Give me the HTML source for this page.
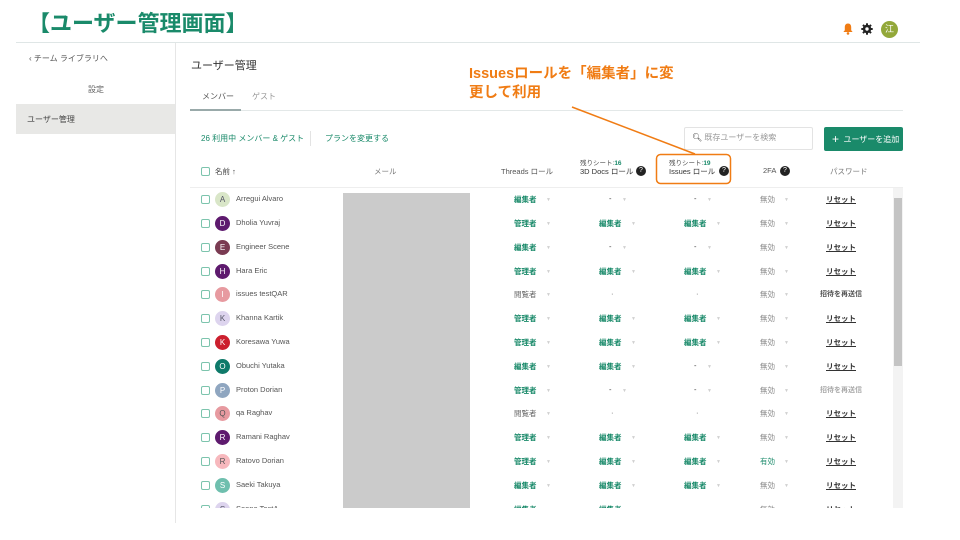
<!DOCTYPE html>
<html><head><meta charset="utf-8"><style>
*{margin:0;padding:0;box-sizing:border-box}
body{width:960px;height:540px;background:#fff;position:relative;overflow:hidden;font-family:"Liberation Sans","Noto Sans CJK JP",sans-serif;color:#555}
.a{position:absolute;white-space:nowrap}
.g{color:#1a8a6a;font-weight:bold}
.cb{position:absolute;width:9px;height:9px;border:1px solid #7cc4ad;border-radius:2px}
.av{position:absolute;width:15px;height:15px;border-radius:50%;font-size:8px;text-align:center;line-height:15px;color:#fff}
.ar{color:#d0d0d0;font-size:5px}
.s{font-size:7.5px}
</style></head><body>
<div class="a" style="left:28px;top:6px;font-size:22px;font-weight:bold;color:#1a8a6a;">【ユーザー管理画面】</div>
<div class="a" style="left:16px;top:42px;width:904px;height:1px;background:#dfe6e6"></div>
<div class="a" style="left:175px;top:43px;width:1px;height:480px;background:#e6e6e6"></div>
<div class="a" style="left:841px;top:22px;width:14px;height:14px"><svg width="14" height="14" viewBox="0 0 14 14"><path d="M7 1.5C4.8 1.5 3.8 3.2 3.8 5.2V8.3L2.4 10H11.6L10.2 8.3V5.2C10.2 3.2 9.2 1.5 7 1.5Z" fill="#f07c14"/><circle cx="7" cy="11.4" r="1.3" fill="#f07c14"/></svg></div>
<div class="a" style="left:860px;top:22px;width:14px;height:14px"><svg width="14" height="14" viewBox="0 0 14 14"><g fill="#222"><circle cx="7" cy="7" r="4.2"/><rect x="6" y="1.3" width="2" height="11.4"/><rect x="1.3" y="6" width="11.4" height="2"/><rect x="6" y="1.3" width="2" height="11.4" transform="rotate(45 7 7)"/><rect x="6" y="1.3" width="2" height="11.4" transform="rotate(-45 7 7)"/></g><circle cx="7" cy="7" r="1.7" fill="#fff"/></svg></div>
<div class="a" style="left:881px;top:21px;width:17px;height:17px;border-radius:50%;background:#93a83a;color:#fff;font-size:9px;text-align:center;line-height:17px">江</div>
<div class="a" style="left:29px;top:53px;font-size:8px;color:#555">‹ チーム ライブラリへ</div>
<div class="a" style="left:88px;top:84px;font-size:8px;color:#666">設定</div>
<div class="a" style="left:16px;top:104px;width:159px;height:30px;background:#e8e8e6"></div>
<div class="a" style="left:27px;top:114px;font-size:8px;color:#444">ユーザー管理</div>
<div class="a" style="left:191px;top:57px;font-size:11px;color:#333">ユーザー管理</div>
<div class="a" style="left:202px;top:91px;font-size:8px;color:#555">メンバー</div>
<div class="a" style="left:252px;top:91px;font-size:8px;color:#999">ゲスト</div>
<div class="a" style="left:190px;top:110px;width:713px;height:1px;background:#e3e8e8"></div>
<div class="a" style="left:190px;top:109px;width:51px;height:2px;background:#9aa"></div>
<div class="a" style="left:201px;top:133px;font-size:8px;color:#1a8a6a">26 利用中 メンバー &amp; ゲスト</div>
<div class="a" style="left:310px;top:131px;width:1px;height:15px;background:#e3e3e3"></div>
<div class="a" style="left:325px;top:133px;font-size:8px;color:#1a8a6a">プランを変更する</div>
<div class="a" style="left:684px;top:127px;width:129px;height:23px;border:1px solid #e3e3e3;border-radius:2px"></div>
<div class="a" style="left:692px;top:132px;font-size:8px;color:#999"><span style="color:#333">&#x1F50D;&#xFE0E;</span> 既存ユーザーを検索</div>
<div class="a" style="left:824px;top:127px;width:79px;height:24px;background:#1a8a6a;border-radius:2px;color:#fff;font-size:8px;line-height:24px;padding-left:8px"><span style="font-size:12px;vertical-align:-1px">+</span>&nbsp; ユーザーを追加</div>
<div class="a" style="left:469px;top:65px;font-size:14.5px;font-weight:bold;color:#f07c14;line-height:19px">Issuesロールを「編集者」に変<br>更して利用</div>
<svg class="a" style="left:0;top:0" width="960" height="540"><line x1="572" y1="107" x2="695" y2="154" stroke="#f07c14" stroke-width="1.5"/><rect x="656.5" y="154.5" width="74" height="29" rx="4" fill="none" stroke="#f07c14" stroke-width="1.5"/></svg>
<div class="cb" style="left:201px;top:167px"></div>
<div class="a s" style="left:215px;top:166px;color:#444">名前 ↑</div>
<div class="a s" style="left:374px;top:166px;color:#777">メール</div>
<div class="a s" style="left:501px;top:166px;color:#555">Threads ロール</div>
<div class="a" style="left:580px;top:157px;font-size:6.5px;color:#555">残りシート:<b style="color:#1a8a6a">16</b></div>
<div class="a s" style="left:580px;top:166px;color:#333">3D Docs ロール</div>
<div class="a" style="left:669px;top:157px;font-size:6.5px;color:#555">残りシート:<b style="color:#1a8a6a">19</b></div>
<div class="a s" style="left:669px;top:166px;color:#333">Issues ロール</div>
<div class="a s" style="left:763px;top:166px;color:#555">2FA</div>
<div class="a s" style="left:830px;top:166px;color:#777">パスワード</div>
<div class="a" style="left:636px;top:166px;width:10px;height:10px;border-radius:50%;background:#222;color:#fff;font-size:7px;text-align:center;line-height:10px">?</div>
<div class="a" style="left:719px;top:166px;width:10px;height:10px;border-radius:50%;background:#222;color:#fff;font-size:7px;text-align:center;line-height:10px">?</div>
<div class="a" style="left:780px;top:166px;width:10px;height:10px;border-radius:50%;background:#222;color:#fff;font-size:7px;text-align:center;line-height:10px">?</div>
<div class="a" style="left:190px;top:187px;width:713px;height:1px;background:#eee"></div>
<div class="a" style="left:343px;top:193px;width:127px;height:315px;background:#cbcbcb"></div>
<div class="a" style="left:893px;top:188px;width:10px;height:320px;background:#f3f3f3"></div>
<div class="a" style="left:894px;top:198px;width:8px;height:168px;background:#c4c4c4"></div>
<div id="rows" class="a" style="left:0;top:0;width:960px;height:508px;overflow:hidden"></div>
<script>
const R=[["A","Arregui Alvaro","#d9e6c8","#556","E","-","-",0,1],
["D","Dholia Yuvraj","#5e1a6e","#fff","A","E","E",0,1],
["E","Engineer Scene","#7a3b52","#fff","E","-","-",0,1],
["H","Hara Eric","#5e1a6e","#fff","A","E","E",0,1],
["I","issues testQAR","#e79aa0","#fff","V",".",".",0,2],
["K","Khanna Kartik","#ddd4ee","#556","A","E","E",0,1],
["K","Koresawa Yuwa","#cc1f2e","#fff","A","E","E",0,1],
["O","Obuchi Yutaka","#0f7a6a","#fff","E","E","-",0,1],
["P","Proton Dorian","#8fa6c0","#fff","A","-","-",0,3],
["Q","qa Raghav","#e79aa0","#555","V",".",".",0,1],
["R","Ramani Raghav","#5e1a6e","#fff","A","E","E",0,1],
["R","Ratovo Dorian","#f7b8bd","#555","A","E","E",1,1],
["S","Saeki Takuya","#6fbfae","#fff","E","E","E",0,1],
["S","Soone TestA","#ddd4ee","#556","E","E","-",0,1]];
const ys=[199,223,247,271,294,318,342,366,390,413,437,461,485,509];
const role=(v,x,arx,darx,y)=>{let s='';
 if(v==="E")s=`<div class="a g s" style="left:${x}px;top:${y}px">編集者</div>`;
 else if(v==="A")s=`<div class="a g s" style="left:${x}px;top:${y}px">管理者</div>`;
 else if(v==="V")s=`<div class="a s" style="left:${x}px;top:${y}px;color:#666">閲覧者</div>`;
 else if(v==="-")s=`<div class="a s" style="left:${x+10}px;top:${y}px;color:#333">-</div>`;
 else s=`<div class="a s" style="left:${x+12}px;top:${y}px;color:#555">·</div>`;
 if(v!==".")s+=`<div class="a ar" style="left:${v==="-"?darx:arx}px;top:${y+3}px">▼</div>`;return s;};
let h='';
R.forEach((r,i)=>{const y=ys[i]-5;
h+=`<div class="cb" style="left:201px;top:${y+1}px"></div>`;
h+=`<div class="av" style="left:215px;top:${y-2}px;background:${r[2]};color:${r[3]}">${r[0]}</div>`;
h+=`<div class="a" style="left:236px;top:${y}px;font-size:7.5px;color:#555">${r[1]}</div>`;
h+=role(r[4],514,546,546,y)+role(r[5],599,631,622,y)+role(r[6],684,716,707,y);
h+=`<div class="a s" style="left:760px;top:${y}px;color:${r[7]?'#1a8a6a':'#888'}">${r[7]?'有効':'無効'}</div><div class="a ar" style="left:784px;top:${y+3}px">▼</div>`;
if(r[8]==1)h+=`<div class="a s" style="left:826px;top:${y}px;color:#333;text-decoration:underline;font-weight:bold">リセット</div>`;
else h+=`<div class="a" style="left:820px;top:${y}px;font-size:7px;color:${r[8]==2?'#555':'#aaa'};font-weight:bold">招待を再送信</div>`;
});
document.getElementById('rows').innerHTML=h;
</script>
</body></html>
